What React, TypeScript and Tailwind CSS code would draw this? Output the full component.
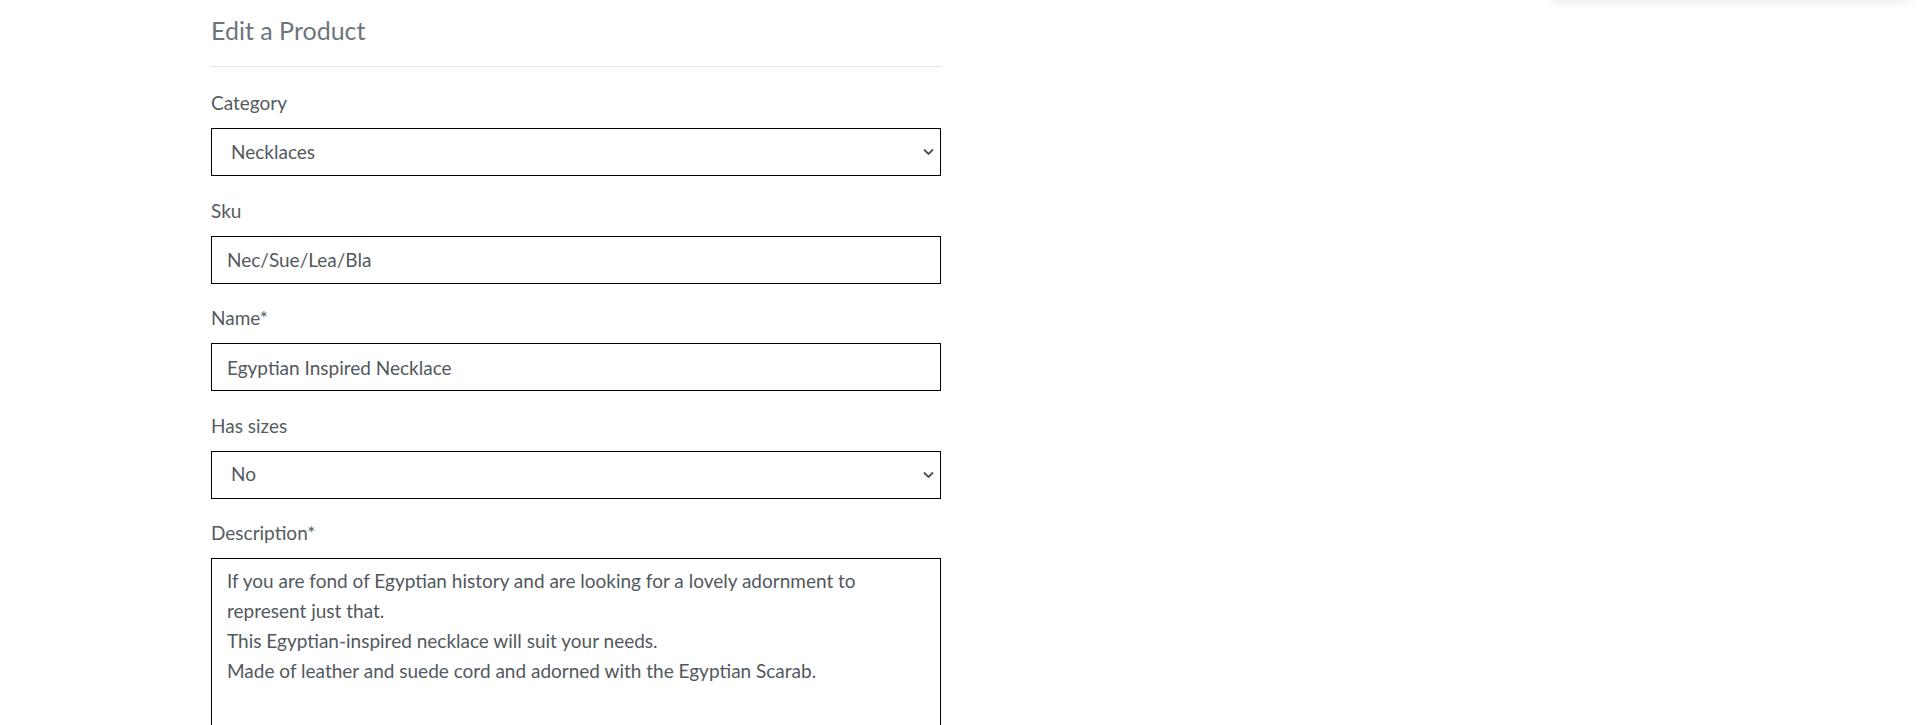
import React, { useState } from 'react'

const labelCls = "block text-[19px] leading-[25px] mb-[13px] text-[#555b61]"
const boxCls = "block w-full h-[48px] border border-black bg-white px-[15px] text-[19px] text-[#52585e] outline-none"

function Select({ value, onChange, children }: { value: string, onChange: (v: string) => void, children: React.ReactNode }) {
  return (
    <div className="relative">
      <select
        className={boxCls + " appearance-none pl-[19px] pr-[30px]"}
        value={value}
        onChange={(e) => onChange(e.target.value)}
      >
        {children}
      </select>
      <svg className="pointer-events-none absolute right-[7px] top-1/2 -translate-y-1/2" width="11" height="7" viewBox="0 0 11 7" fill="none">
        <path d="M1 1l4.5 4.5L10 1" stroke="#4a4f55" strokeWidth="1.8" />
      </svg>
    </div>
  )
}

export default function App() {
  const [category, setCategory] = useState('necklaces')
  const [sku, setSku] = useState('Nec/Sue/Lea/Bla')
  const [name, setName] = useState('Egyptian Inspired Necklace')
  const [hasSizes, setHasSizes] = useState('no')
  const [description, setDescription] = useState(
    'If you are fond of Egyptian history and are looking for a lovely adornment to represent just that.\nThis Egyptian-inspired necklace will suit your needs.\nMade of leather and suede cord and adorned with the Egyptian Scarab.'
  )

  return (
    <div className="relative min-h-[725px] w-full overflow-hidden bg-white font-['Lato',sans-serif]">
      {/* toast panel sitting just above the viewport */}
      <div className="absolute top-[-60px] right-[8px] w-[362px] h-[60px] rounded-md bg-white shadow-[0_2px_10px_rgba(0,0,0,0.08)]"></div>

      <div className="ml-[211px] w-[730px]">
        <div className="pt-[16px] pb-[21px] border-b border-[#e6e6e6]">
          <h2 className="text-[25px] leading-[29px] text-[#6c757d]">Edit a Product</h2>
        </div>

        <form className="pt-[23px]">
          <div className="mb-[21.5px]">
            <label className={labelCls}>Category</label>
            <Select value={category} onChange={setCategory}>
              <option value="bracelets">Bracelets</option>
              <option value="earrings">Earrings</option>
              <option value="necklaces">Necklaces</option>
              <option value="rings">Rings</option>
            </Select>
          </div>

          <div className="mb-[21.5px]">
            <label className={labelCls}>Sku</label>
            <input className={boxCls} value={sku} onChange={(e) => setSku(e.target.value)} />
          </div>

          <div className="mb-[21.5px]">
            <label className={labelCls}>Name*</label>
            <input className={boxCls} value={name} onChange={(e) => setName(e.target.value)} />
          </div>

          <div className="mb-[21.5px]">
            <label className={labelCls}>Has sizes</label>
            <Select value={hasSizes} onChange={setHasSizes}>
              <option value="no">No</option>
              <option value="yes">Yes</option>
            </Select>
          </div>

          <div className="mb-[21.5px]">
            <label className={labelCls}>Description*</label>
            <textarea
              className="block w-full h-[220px] border border-black bg-white px-[15px] pt-[7px] text-[19px] leading-[30px] text-[#52585e] outline-none resize-none"
              value={description}
              onChange={(e) => setDescription(e.target.value)}
            />
          </div>
        </form>
      </div>
    </div>
  )
}
